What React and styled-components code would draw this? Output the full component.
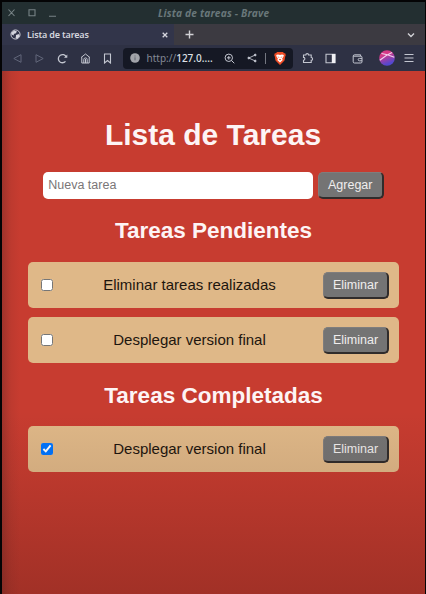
import React, { useState } from "react";
import styled, { createGlobalStyle } from "styled-components";

const GlobalStyle = createGlobalStyle`
  * { box-sizing: border-box; }
  html, body { margin: 0; background: #000; overflow: hidden; }
`;

const Window = styled.div`
  width: 426px;
  height: 594px;
  padding: 2px 1px 0 2px;
  background: #040405;
  display: flex;
  flex-direction: column;
  font-family: "Noto Sans", "Open Sans", sans-serif;
`;

const TitleBar = styled.header`
  height: 22px;
  flex: none;
  display: flex;
  align-items: center;
  background: #232f31;
`;

const WindowControls = styled.div`
  width: 62px;
  flex: none;
  display: flex;
  color: #788386;
  svg { display: block; }
`;

const WindowTitle = styled.div`
  flex: 1;
  padding-left: 94px;
  color: #69777a;
  font-size: 10.2px;
  letter-spacing: 0.18px;
  font-weight: 700;
  font-style: italic;
  line-height: 22px;
  white-space: nowrap;
`;

const TabStrip = styled.nav`
  height: 21px;
  flex: none;
  display: flex;
  background: #3c3a41;
`;

const Tab = styled.div`
  width: 172px;
  display: flex;
  align-items: center;
  padding: 0 6px 0 8px;
  background: #32354a;
  color: #d5d6de;
`;

const TabLabel = styled.span`
  flex: 1;
  margin-left: 6px;
  font-size: 9px;
  font-weight: 600;
  line-height: 20px;
  letter-spacing: -0.15px;
`;

const StripButton = styled.div`
  display: flex;
  align-items: center;
  margin-left: ${(p) => p.$gap}px;
  color: #d2d2d6;
`;

const Toolbar = styled.div`
  height: 26px;
  flex: none;
  display: flex;
  align-items: center;
  background: #2e3144;
`;

const Slot = styled.span`
  width: ${(p) => p.$size || 14}px;
  flex: none;
  margin-left: ${(p) => p.$gap || 0}px;
  display: flex;
  justify-content: center;
  color: ${(p) => (p.$dim ? "#62677a" : "#c3c6d0")};
`;

const AddressBar = styled.div`
  width: 170px;
  height: 21px;
  flex: none;
  margin-left: 8px;
  display: flex;
  align-items: center;
  border-radius: 4px;
  background: #151824;
`;

const Url = styled.span`
  width: 68px;
  margin-left: 4px;
  font-size: 10px;
  line-height: 20px;
  color: #848995;
  white-space: nowrap;
  b { color: #dfe1e6; font-weight: 500; }
`;

const Divider = styled.i`
  width: 1px;
  height: 11px;
  margin-left: 6px;
  background: #747781;
`;

const Page = styled.main`
  position: relative;
  flex: 1;
  display: flex;
  flex-direction: column;
  align-items: center;
  background: #c73c30;
  font-family: "Liberation Sans", Arial, sans-serif;

  &::after {
    content: "";
    position: absolute;
    inset: 0;
    pointer-events: none;
    background:
      linear-gradient(90deg, rgba(75, 32, 32, 0.32), rgba(75, 32, 32, 0.08) 9px, transparent 18px),
      linear-gradient(180deg, transparent 340px, rgba(50, 15, 10, 0.07) 400px, rgba(50, 15, 10, 0.25) 523px);
  }
`;

const Title = styled.h1`
  margin: 46px 0 0;
  padding-right: 1px;
  height: 36px;
  line-height: 36px;
  font-size: 30px;
  color: #fdf4f5;
`;

const Form = styled.form`
  display: flex;
  gap: 4.5px;
  margin-top: 18.5px;
`;

const TaskInput = styled.input`
  width: 270px;
  height: 27px;
  padding: 0 5px;
  border: 0;
  border-radius: 5px;
  background: #fff;
  font: 12.5px "Liberation Sans", Arial, sans-serif;
  outline: none;
  &::placeholder { color: #7a7677; }
`;

const Button = styled.button`
  width: 66px;
  height: 27px;
  flex: none;
  padding: 0;
  border: 2px solid;
  border-width: 1px 2px 2px 1px;
  border-color: #7f7d7d #302c2b #302c2b #7f7d7d;
  border-radius: 5px;
  background: #747474;
  color: #f0eeee;
  font: 12.5px "Liberation Sans", Arial, sans-serif;
`;

const DeleteButton = styled(Button)`
  margin-top: 1px;
`;

const SectionTitle = styled.h2`
  height: 28px;
  margin: ${(p) => p.$top}px 0 17.5px;
  padding: 1px 0 0;
  line-height: 28px;
  font-size: 22.5px;
  color: #fdf4f5;
`;

const TaskList = styled.ul`
  width: 371px;
  margin: 0;
  padding: 0;
  display: flex;
  flex-direction: column;
  gap: 9px;
  list-style: none;
`;

const TaskItem = styled.li`
  height: 46px;
  padding: 0 10px 0 13px;
  display: flex;
  align-items: center;
  justify-content: space-between;
  border-radius: 5px;
  background: #dfb888;
  color: #1d150e;
  font-size: 15px;
`;

const TaskText = styled.span`
  padding-left: 3px;
  line-height: 18px;
`;

const Checkbox = styled.input`
  width: 12px;
  height: 12px;
  margin: 0;
`;

const Icon = ({ w = 12, h = w, box = "0 0 24 24", sw = 2, children }) => (
  <svg width={w} height={h} viewBox={box} fill="none" stroke="currentColor" strokeWidth={sw}>
    {children}
  </svg>
);

function Task({ text, done }) {
  const [checked, setChecked] = useState(Boolean(done));
  return (
    <TaskItem>
      <Checkbox type="checkbox" checked={checked} onChange={() => setChecked(!checked)} />
      <TaskText>{text}</TaskText>
      <DeleteButton type="button">Eliminar</DeleteButton>
    </TaskItem>
  );
}

function BrowserTabs() {
  return (
    <TabStrip>
      <Tab>
        <Icon w={11}>
          <circle cx="12" cy="12" r="10" />
          <path d="M3 8l6-5 6 2-2 4-5 2 1 3-6-2zM13 13l7-2 1 5-5 5-4-1 1-4z" fill="currentColor" stroke="none" />
        </Icon>
        <TabLabel>Lista de tareas</TabLabel>
        <Icon w={6} box="0 0 6 6" sw={1.3}><path d="M.7.7l4.6 4.6M5.3.7L.7 5.3" /></Icon>
      </Tab>
      <StripButton $gap={10.5}>
        <Icon w={9} box="0 0 9 9" sw={1.4}><path d="M4.5.5v8M.5 4.5h8" /></Icon>
      </StripButton>
      <StripButton $gap={213}>
        <Icon w={8} box="0 0 8 8" sw={1.4}><path d="M1 2.5l3 3 3-3" /></Icon>
      </StripButton>
    </TabStrip>
  );
}

function BrowserToolbar() {
  return (
    <Toolbar>
      <Slot $gap={8} $dim><Icon w={9} box="0 0 9 9" sw={1}><path d="M8 .7v7.6L.8 4.5z" /></Icon></Slot>
      <Slot $gap={8.5} $dim><Icon w={9} box="0 0 9 9" sw={1}><path d="M1 .7v7.6l7.2-3.8z" /></Icon></Slot>
      <Slot $gap={8.5}>
        <Icon w={11} box="0 0 11 11" sw={1.3}>
          <path d="M8.5 8.4A4.1 4.1 0 1 1 9.2 4" />
          <path d="M7 4.7h3.3V1.6z" fill="currentColor" stroke="none" />
        </Icon>
      </Slot>
      <Slot $gap={9}>
        <Icon w={11} box="0 0 11 11" sw={1}>
          <path d="M1 4.6L5.5 1 10 4.6M1.8 4.3V10h7.4V4.3M3.8 10V6.6a1.7 1.7 0 0 1 3.4 0V10M5.5 6v4" />
        </Icon>
      </Slot>
      <Slot $gap={8.5}><Icon w={11} box="0 0 11 11" sw={1.1}><path d="M2.5 1h6v9l-3-2.5-3 2.5z" /></Icon></Slot>
      <AddressBar>
        <Slot $gap={5} $size={15}>
          <Icon w={10} box="0 0 10 10" sw={1}>
            <circle cx="5" cy="5" r="4.8" fill="#a2a4aa" stroke="none" />
            <path d="M5 4.3v3M5 2.5v1" stroke="#61646e" />
          </Icon>
        </Slot>
        <Url>http://<b>127.0....</b></Url>
        <Slot $gap={8}>
          <Icon w={11} box="0 0 11 11" sw={1}>
            <circle cx="4.8" cy="4.8" r="3.7" /><path d="M7.5 7.5l2.8 2.8M3 4.8h3.6M4.8 3v3.6" />
          </Icon>
        </Slot>
        <Slot $gap={8.5}>
          <Icon w={10} box="0 0 10 10" sw={0.9}>
            <path d="M8.2 2L1.8 5l6.4 3" />
            <circle cx="8.2" cy="2" r="0.9" fill="currentColor" />
            <circle cx="1.8" cy="5" r="0.9" fill="currentColor" />
            <circle cx="8.2" cy="8" r="0.9" fill="currentColor" />
          </Icon>
        </Slot>
        <Divider />
        <Slot $gap={6.5}>
          <Icon w={12} h={13} box="0 0 12 13" sw={0}>
            <path d="M3 0h6l1 1.2 1.2.1.6 2-.5 1-.8 4.3L6 13 1.5 8.6.7 4.3l-.5-1 .6-2L2 1.2z" fill="#ee4b25" />
            <path d="M2.2 3L4 2.5l2 .5 2-.5 1.8.5-.3 1.6-1.4 2.1.6 1.4L6 10.5 3.3 8.1l.6-1.4-1.4-2.1z" fill="#fff" />
            <path d="M3.4 4.5l1.8.5v1zM8.6 4.5L6.8 5v1zM4.7 7.5L6 6.7l1.3.8L6 8.5z" fill="#ee4b25" />
          </Icon>
        </Slot>
      </AddressBar>
      <Slot $gap={8.5}>
        <Icon w={12} box="0 0 12 12" sw={1.1}>
          <path d="M1.5 3h2.3a1.4 1.4 0 1 1 2.8 0h2.6v2.5a1.4 1.4 0 1 1 0 2.8v2.2H1.5V8.2a1.4 1.4 0 1 0 0-2.8z" />
        </Icon>
      </Slot>
      <Slot $gap={8.5}>
        <Icon w={11} box="0 0 11 11" sw={1.1}>
          <path d="M1 1.2h9v8.6H1z" /><path d="M6.8 1h3.5v9H6.8z" fill="#f0f0f4" stroke="none" />
        </Icon>
      </Slot>
      <Slot $gap={13}>
        <Icon w={11} box="0 0 11 11" sw={1}>
          <path d="M1.2 3.2v5.6q0 1.2 1.2 1.2h6.4q1.2 0 1.2-1.2V4.4q0-1.2-1.2-1.2zM1.2 3.2q0-1.4 1.4-1.4h6v1.4M10 5.4H7.4a1.2 1.2 0 0 0 0 2.4H10" />
        </Icon>
      </Slot>
      <Slot $gap={14} $size={16}>
        <Icon w={16} box="0 0 16 16" sw={1.2}>
          <defs>
            <linearGradient id="avatar" x1="0.3" y1="0" x2="0.7" y2="1">
              <stop offset="0.25" stopColor="#d63a86" /><stop offset="0.85" stopColor="#5447cf" />
            </linearGradient>
          </defs>
          <circle cx="8" cy="8" r="7.8" fill="url(#avatar)" stroke="none" />
          <path d="M.8 10.3Q7 5 13 2.5M2.5 3.5Q8 4 15.3 7.3" stroke="#f4cfee" />
        </Icon>
      </Slot>
      <Slot $gap={7.5}>
        <Icon w={10} box="0 0 10 10" sw={1.1}><path d="M.5 1.5h9M.5 5h9M.5 8.5h9" /></Icon>
      </Slot>
    </Toolbar>
  );
}

export default function App() {
  return (
    <Window>
      <GlobalStyle />
      <TitleBar>
        <WindowControls>
          <Icon w={62} h={12} box="0 0 62 12" sw={1.1}>
            <path d="M6.5 2.5l6 6.5M12.5 2.5l-6 6.5M27 2.8h6v6h-6zM47 9.3h7" />
          </Icon>
        </WindowControls>
        <WindowTitle>Lista de tareas - Brave</WindowTitle>
      </TitleBar>
      <BrowserTabs />
      <BrowserToolbar />
      <Page>
        <Title>Lista de Tareas</Title>
        <Form onSubmit={(e) => e.preventDefault()}>
          <TaskInput placeholder="Nueva tarea" />
          <Button>Agregar</Button>
        </Form>
        <SectionTitle $top={17.5}>Tareas Pendientes</SectionTitle>
        <TaskList>
          <Task text="Eliminar tareas realizadas" />
          <Task text="Desplegar version final" />
        </TaskList>
        <SectionTitle $top={18}>Tareas Completadas</SectionTitle>
        <TaskList>
          <Task text="Desplegar version final" done />
        </TaskList>
      </Page>
    </Window>
  );
}
